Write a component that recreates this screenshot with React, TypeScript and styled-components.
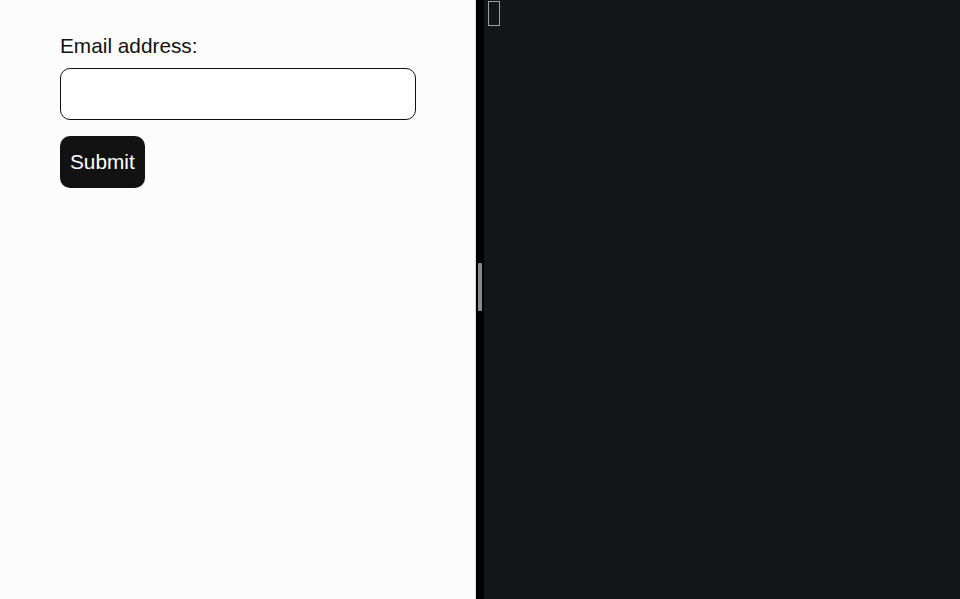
import styled, { createGlobalStyle } from "styled-components";

const GlobalStyle = createGlobalStyle`
  html, body {
    margin: 0;
    padding: 0;
    height: 100%;
    overflow: hidden;
  }
  #root {
    height: 100%;
  }
`;

const Layout = styled.div`
  display: flex;
  height: 100vh;
  width: 100vw;
`;

const PreviewPane = styled.div`
  width: 476px;
  flex-shrink: 0;
  background: #fcfcfc;
  border-right: 1px solid #d9d9d9;
  padding: 32px 0 0 60px;
  box-sizing: border-box;
  font-family: "Liberation Sans", Arial, sans-serif;
  color: #111;
`;

const Form = styled.form`
  display: flex;
  flex-direction: column;
  align-items: flex-start;
`;

const Label = styled.label`
  font-size: 20.8px;
  line-height: 28px;
  margin-bottom: 8px;
`;

const EmailInput = styled.input`
  width: 356px;
  height: 52px;
  box-sizing: border-box;
  border: 1px solid #111;
  border-radius: 10px;
  background: #fff;
  font-size: 20.8px;
  font-family: inherit;
  padding: 0 12px;
  outline: none;
  margin-bottom: 16px;
`;

const SubmitButton = styled.button`
  height: 52px;
  padding: 0 10px;
  border: none;
  border-radius: 10px;
  background: #121212;
  color: #fff;
  font-family: inherit;
  font-size: 20.8px;
  cursor: pointer;
`;

const Divider = styled.div`
  width: 8px;
  flex-shrink: 0;
  background: #000;
  display: flex;
  align-items: center;
  justify-content: center;
`;

const Handle = styled.div`
  width: 4px;
  height: 48px;
  border-radius: 1px;
  background: #8a8a8a;
  margin-bottom: 26px;
`;

const Terminal = styled.div`
  flex: 1;
  background: #121619;
  padding: 1px 0 0 4px;
`;

const Cursor = styled.div`
  width: 12px;
  height: 25px;
  box-sizing: border-box;
  border: 1px solid #a0a0a0;
`;

export default function App() {
  return (
    <>
      <GlobalStyle />
      <Layout>
        <PreviewPane>
          <Form onSubmit={(e) => e.preventDefault()}>
            <Label htmlFor="email">Email address:</Label>
            <EmailInput id="email" type="email" />
            <SubmitButton type="submit">Submit</SubmitButton>
          </Form>
        </PreviewPane>
        <Divider>
          <Handle />
        </Divider>
        <Terminal>
          <Cursor />
        </Terminal>
      </Layout>
    </>
  );
}
